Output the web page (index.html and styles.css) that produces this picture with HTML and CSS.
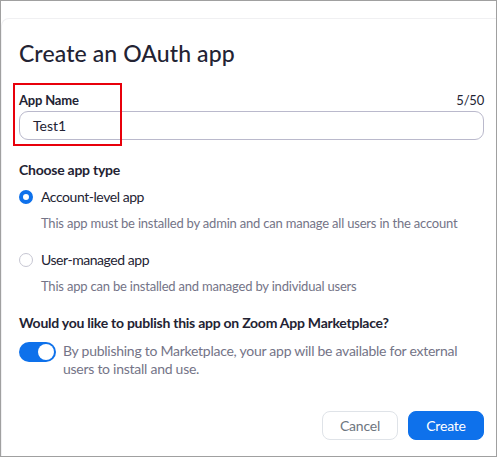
FILE: index.html
```html
<!DOCTYPE html>
<html>
<head>
<meta charset="utf-8">
<link rel="stylesheet" href="styles.css">
</head>
<body>
<div class="frame">
  <div class="modal">
    <h1 class="title">Create an OAuth app</h1>
    <div class="field">
      <div class="field-head">
        <span class="label">App Name</span>
        <span class="count">5/50</span>
      </div>
      <div class="input">Test1</div>
      <div class="highlight"></div>
    </div>
    <div class="section">
      <div class="section-title">Choose app type</div>
      <div class="option">
        <span class="radio checked"></span>
        <span class="option-label">Account-level app</span>
      </div>
      <div class="option-desc">This app must be installed by admin and can manage all users in the account</div>
      <div class="option second">
        <span class="radio"></span>
        <span class="option-label">User-managed app</span>
      </div>
      <div class="option-desc">This app can be installed and managed by individual users</div>
    </div>
    <div class="section publish">
      <div class="section-title">Would you like to publish this app on Zoom App Marketplace?</div>
      <div class="toggle-row">
        <span class="toggle"><span class="knob"></span></span>
        <span class="toggle-desc">By publishing to Marketplace, your app will be available for external users to install and use.</span>
      </div>
    </div>
    <div class="actions">
      <button class="btn btn-cancel">Cancel</button>
      <button class="btn btn-primary">Create</button>
    </div>
  </div>
</div>
</body>
</html>
```

FILE: styles.css
```css
* { box-sizing: border-box; }
html, body { margin: 0; padding: 0; }
body {
  width: 497px;
  height: 457px;
  font-family: "Lato", "Open Sans", sans-serif;
  color: #232333;
  background: #fff;
  overflow: hidden;
}
.frame {
  width: 497px;
  height: 457px;
  border: 1px solid #a0a0a0;
  padding-top: 17px;
  background: #fff;
}
.modal {
  height: 100%;
  border-top: 1px solid #f0f0f2;
  border-left: 1px solid #f0f0f2;
  border-top-left-radius: 8px;
  padding: 0 12px 0 17px;
}
.title {
  margin: 0;
  padding-top: 19px;
  font-size: 23px;
  font-weight: 500;
  line-height: 30px;
  color: #232333;
  letter-spacing: 0.1px;
}
.field {
  position: relative;
  margin-top: 23px;
}
.field-head {
  display: flex;
  justify-content: space-between;
  align-items: baseline;
  font-size: 13px;
  line-height: 18px;
}
.label { font-weight: 700; color: #232333; letter-spacing: -0.2px; }
.count { color: #232333; letter-spacing: -0.2px; }
.input {
  margin-top: 2px;
  height: 29px;
  border: 1px solid #bab9cc;
  border-radius: 9px;
  padding: 0 13px;
  font-size: 14px;
  line-height: 27px;
  color: #232333;
}
.highlight {
  position: absolute;
  left: -6px;
  top: -8px;
  width: 109px;
  height: 63px;
  border: 2px solid #e8000b;
}
.section { margin-top: 21px; }
.section-title {
  font-size: 14px;
  font-weight: 700;
  line-height: 18px;
  color: #232333;
  letter-spacing: -0.25px;
}
.option {
  display: flex;
  align-items: center;
  margin-top: 8px;
  font-size: 14px;
  line-height: 20px;
  letter-spacing: -0.45px;
}
.option.second { margin-top: 18px; }
.radio {
  width: 14px;
  height: 14px;
  border-radius: 50%;
  border: 1px solid #c6c6d2;
  margin-right: 8px;
  flex: none;
}
.radio.checked {
  border: 4px solid #0e71eb;
  background: #fff;
}
.option-desc {
  margin-top: 7px;
  padding-left: 22px;
  font-size: 13px;
  line-height: 18px;
  color: #747487;
  letter-spacing: -0.2px;
}
.publish { margin-top: 19px; }
.toggle-row {
  display: flex;
  align-items: flex-start;
  margin-top: 10px;
}
.toggle {
  flex: none;
  width: 37px;
  height: 20px;
  border-radius: 10px;
  background: #0e71eb;
  position: relative;
  margin-right: 7px;
}
.knob {
  position: absolute;
  right: 2px;
  top: 2px;
  width: 16px;
  height: 16px;
  border-radius: 50%;
  background: #fff;
}
.toggle-desc {
  font-size: 14px;
  line-height: 18px;
  color: #747487;
  width: 400px;
  letter-spacing: -0.26px;
}
.actions {
  display: flex;
  justify-content: flex-end;
  gap: 10px;
  margin-top: 33px;
}
.btn {
  height: 29px;
  width: 76px;
  border-radius: 8px;
  font-family: inherit;
  font-size: 14px;
  letter-spacing: -0.2px;
  padding: 0;
  cursor: pointer;
}
.btn-cancel {
  background: #fff;
  border: 1px solid #dfe3e8;
  color: #6e7680;
}
.btn-primary {
  background: #0e71eb;
  border: 1px solid #0e71eb;
  color: #fff;
}
```
